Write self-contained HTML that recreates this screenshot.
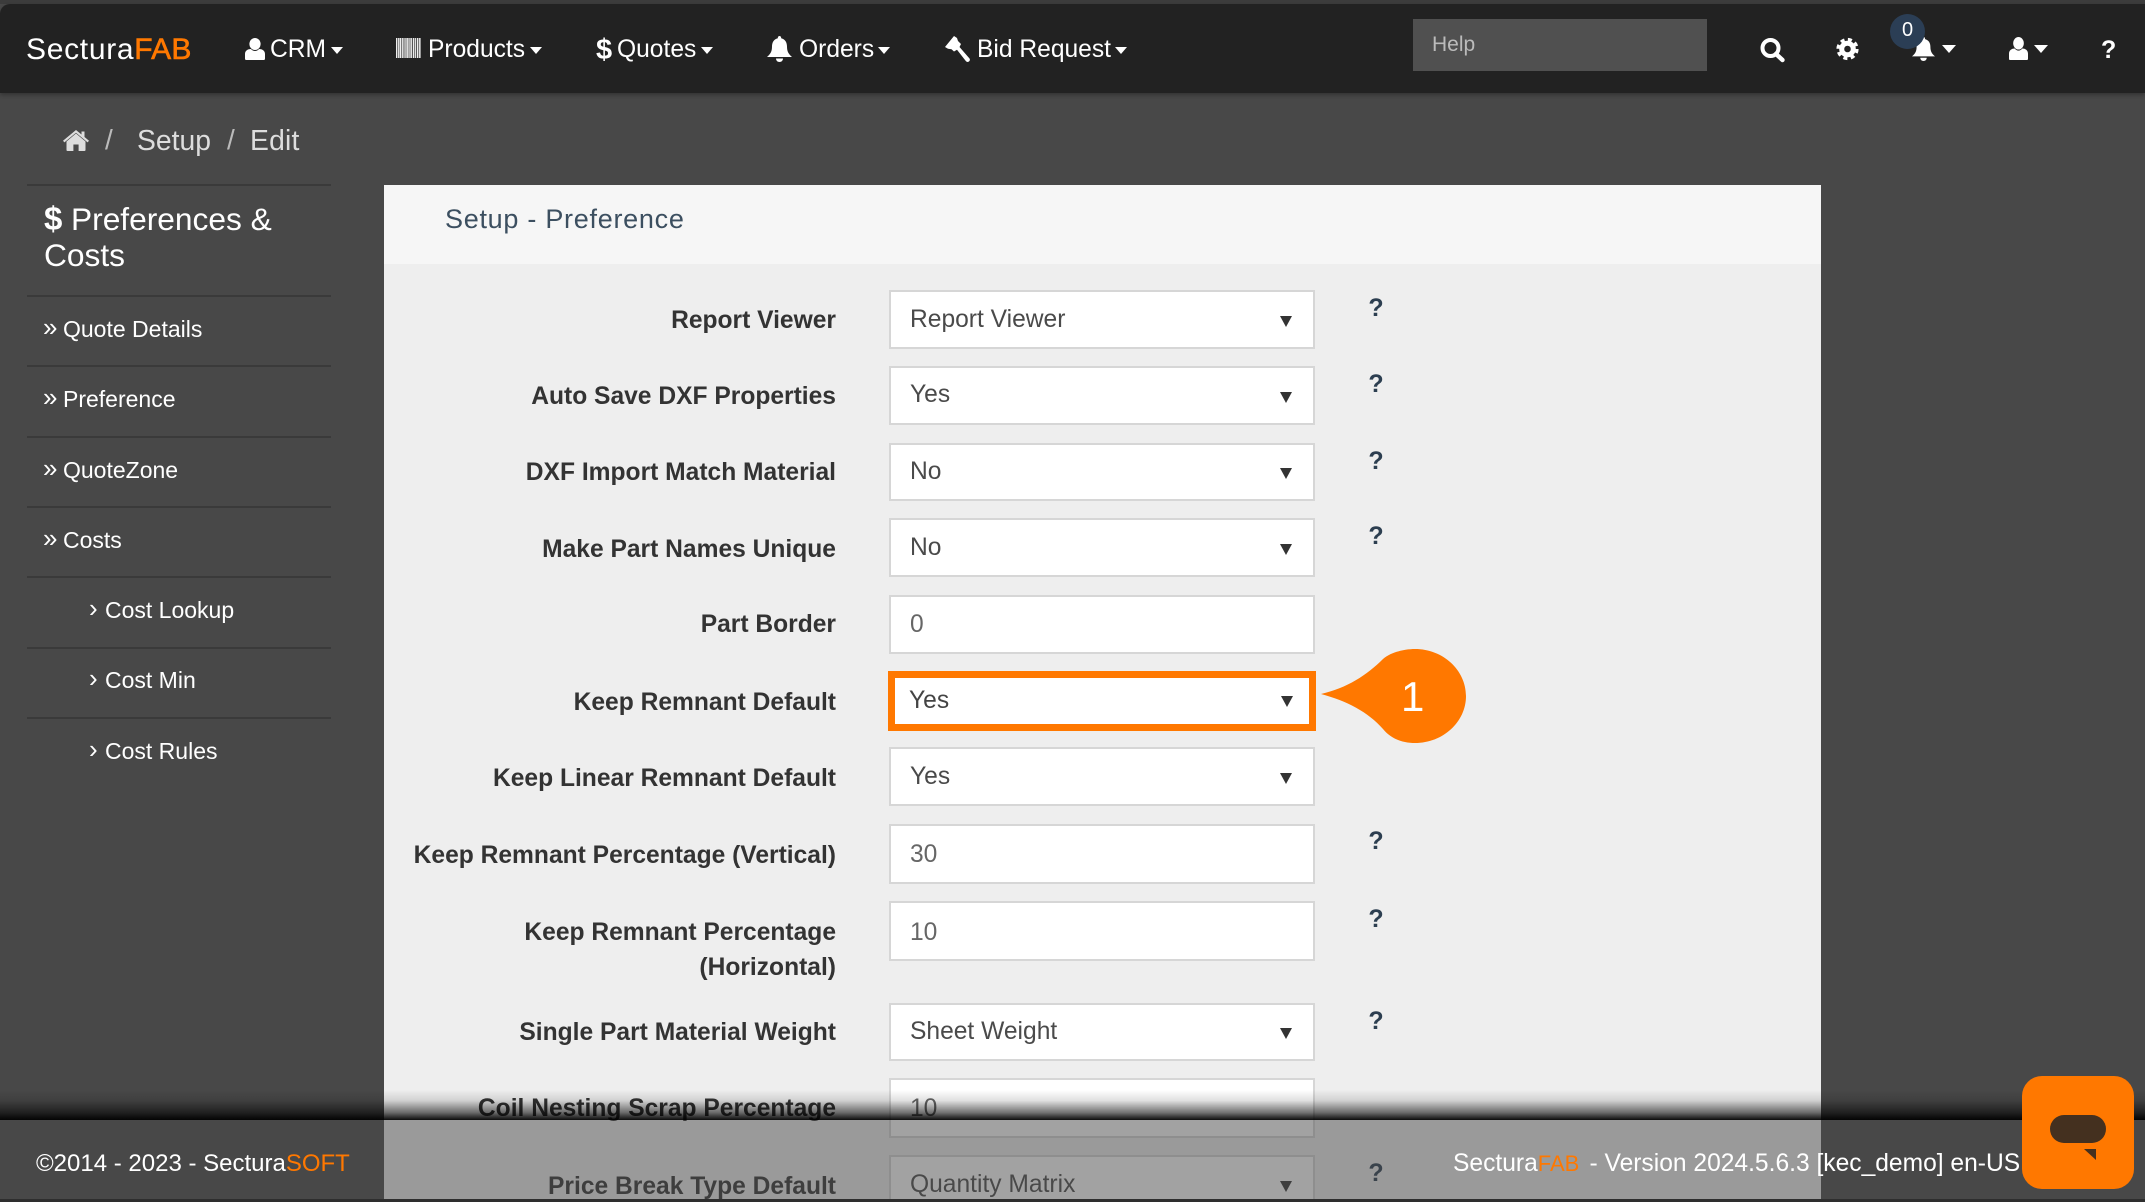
<!DOCTYPE html>
<html><head><meta charset="utf-8"><title>Setup - Preference</title>
<style>
html,body{margin:0;padding:0;width:2145px;height:1202px;overflow:hidden;background:#2e2e2e;font-family:"Liberation Sans",sans-serif}
#p{position:absolute;left:0;top:0;width:2145px;height:1202px;overflow:hidden;background:#484848;filter:blur(.35px)}
.a{position:absolute}
.t{position:absolute;white-space:nowrap;line-height:40px;height:40px}
.n{color:#fff;font-size:24.6px;top:30px}
.c{position:absolute;width:0;height:0;border-left:6.5px solid transparent;border-right:6.5px solid transparent;border-top:7px solid #fff;top:47px}
.l{position:absolute;left:27px;width:304px;height:2px;background:#3a3a3a}
.s{color:#fff;font-size:23px}
.s b{font-weight:normal;font-size:26px;line-height:36px;position:absolute;left:0;top:0}
.lb{position:absolute;right:1309px;font-weight:bold;font-size:24.6px;color:#333;text-align:right;white-space:nowrap;line-height:36px}
.f{position:absolute;left:889px;width:426px;box-sizing:border-box;background:#fff;border:2px solid #d6d6d6;color:#4a4a4a;font-size:24.6px;padding-left:19px}
.f::after{content:"";position:absolute;right:21.5px;top:50%;margin-top:-4px;border-left:6.5px solid transparent;border-right:6.5px solid transparent;border-top:11px solid #333}
.i::after,.h::after{display:none}
.i{color:#666}
.q{position:absolute;left:1368px;width:16px;text-align:center;font-weight:bold;font-size:25px;line-height:30px;color:#2c3e50}
svg{position:absolute;overflow:visible}
</style></head><body><div id="p">

<!-- top chrome -->
<div class="a" style="left:0;top:0;width:2145px;height:4px;background:#3c3c3c"></div>
<div class="a" style="left:0;top:4px;width:2145px;height:89px;background:#222;border-top-left-radius:10px;box-shadow:0 2px 4px rgba(0,0,0,.3)"></div>

<div class="t" style="left:26px;top:30px;font-size:30px;color:#fff;letter-spacing:.7px">Sectura<span style="color:#ff7800;letter-spacing:.2px;-webkit-text-stroke:.6px #ff7800">FAB</span></div>

<svg style="left:245px;top:38px" width="20" height="22" viewBox="0 0 20 22"><ellipse cx="10" cy="6" rx="5.6" ry="6" fill="#fff"/><path d="M1 22C.3 22 0 21.4 0 20.4V16C0 12.5 3 11 6 11C7 12.3 8.5 13 10 13C11.5 13 13 12.3 14 11C17 11 20 12.5 20 16V20.4C20 21.4 19.7 22 19 22Z" fill="#fff"/></svg>
<div class="t n" style="left:270px">CRM</div><div class="c" style="left:331px"></div>

<div class="a" style="left:396px;top:38px;width:25px;height:20px;background:repeating-linear-gradient(90deg,#eee 0 1px,#777 1px 2px,#ddd 2px 3.4px,#555 3.4px 4.2px)"></div>
<div class="t n" style="left:428px">Products</div><div class="c" style="left:530px"></div>

<div class="t" style="left:596px;top:30px;color:#fff;font-size:29px;font-weight:bold">$</div>
<div class="t n" style="left:617px">Quotes</div><div class="c" style="left:701px"></div>

<svg style="left:767px;top:36px" width="25" height="26" viewBox="0 0 25 26"><path d="M12.5 0C13.6 0 14.2.8 14.2 2.2C18.2 3.2 20 6.5 20 10.5C20 15.5 21.5 18 25 21H0C3.5 18 5 15.5 5 10.5C5 6.5 6.8 3.2 10.8 2.2C10.8.8 11.4 0 12.5 0ZM9 22.5H16C16 24.6 14.5 26 12.5 26S9 24.6 9 22.5Z" fill="#fff"/></svg>
<div class="t n" style="left:799px">Orders</div><div class="c" style="left:878px"></div>

<svg style="left:945px;top:36px" width="25" height="26" viewBox="0 0 25 26"><path d="M0 11L9 0L12 2L13 5L16 8L14.5 11L24.5 22.5C25.3 23.6 24.8 25.2 23.5 25.8C22.5 26.2 21.5 25.8 20.8 25L12 13.8L9 15.5L6.5 13.2L3 12.8Z" fill="#fff"/></svg>
<div class="t n" style="left:977px">Bid Request</div><div class="c" style="left:1115px"></div>

<div class="a" style="left:1413px;top:19px;width:294px;height:52px;background:#505050"></div>
<div class="t" style="left:1432px;top:25px;font-size:21px;color:#bbb">Help</div>

<svg style="left:1760px;top:38px" width="25" height="24" viewBox="0 0 25 24"><circle cx="10.5" cy="10" r="8" fill="none" stroke="#fff" stroke-width="4"/><path d="M16 16L22.5 22" stroke="#fff" stroke-width="4.4" stroke-linecap="round"/></svg>
<svg style="left:1836px;top:38px" width="23" height="22" viewBox="0 0 23 22"><circle cx="11.5" cy="11" r="5.8" fill="none" stroke="#fff" stroke-width="5"/><circle cx="11.5" cy="11" r="9.4" fill="none" stroke="#fff" stroke-width="3.4" stroke-dasharray="4 3.4"/></svg>
<svg style="left:1912px;top:37px" width="23" height="24" viewBox="0 0 25 26"><path d="M12.5 0C13.6 0 14.2.8 14.2 2.2C18.2 3.2 20 6.5 20 10.5C20 15.5 21.5 18 25 21H0C3.5 18 5 15.5 5 10.5C5 6.5 6.8 3.2 10.8 2.2C10.8.8 11.4 0 12.5 0ZM9 22.5H16C16 24.6 14.5 26 12.5 26S9 24.6 9 22.5Z" fill="#fff"/></svg>
<div class="a" style="left:1890px;top:14px;width:35px;height:35px;border-radius:50%;background:#2b3e55;color:#fff;font-size:20px;line-height:33px;text-align:center">0</div>
<div class="c" style="left:1942px;top:45px;border-left-width:7.5px;border-right-width:7.5px;border-top-width:8px"></div>
<svg style="left:2009px;top:37px" width="19" height="23" viewBox="0 0 20 22" preserveAspectRatio="none"><ellipse cx="10" cy="6" rx="5.6" ry="6" fill="#fff"/><path d="M1 22C.3 22 0 21.4 0 20.4V16C0 12.5 3 11 6 11C7 12.3 8.5 13 10 13C11.5 13 13 12.3 14 11C17 11 20 12.5 20 16V20.4C20 21.4 19.7 22 19 22Z" fill="#fff"/></svg>
<div class="c" style="left:2034px;top:45px;border-left-width:7.5px;border-right-width:7.5px;border-top-width:8px"></div>
<div class="t" style="left:2101px;top:30px;font-size:25px;font-weight:bold;color:#fff">?</div>

<!-- breadcrumb -->
<svg style="left:63px;top:130px" width="26" height="21" viewBox="0 0 26 21"><path d="M13 3.5L22.5 11.5V20C22.5 20.6 22.1 21 21.5 21H15.6V14.5H10.4V21H4.5C3.9 21 3.5 20.6 3.5 20V11.5ZM13 0L18.5 4.5V1.5H21.5V7L26 10.8L24.6 12.4L13 2.8L1.4 12.4L0 10.8Z" fill="#ddd"/></svg>
<div class="t" style="left:105px;top:120px;font-size:28px;color:#bbb">/</div>
<div class="t" style="left:137px;top:120px;font-size:28.3px;color:#ddd">Setup</div>
<div class="t" style="left:227px;top:120px;font-size:28px;color:#bbb">/</div>
<div class="t" style="left:250px;top:120px;font-size:28.3px;letter-spacing:.2px;color:#ddd">Edit</div>

<!-- sidebar -->
<div class="l" style="top:184px"></div>
<div class="t" style="left:44px;top:199px;font-size:33px;font-weight:bold;color:#fff">$</div>
<div class="t" style="left:71px;top:199px;font-size:31.7px;color:#fff">Preferences &amp;</div>
<div class="t" style="left:44px;top:235px;font-size:31.7px;color:#fff">Costs</div>
<div class="l" style="top:294.5px"></div>
<div class="t s" style="left:43px;top:309px"><b>»</b><span class="a" style="left:20px">Quote Details</span></div>
<div class="l" style="top:364.5px"></div>
<div class="t s" style="left:43px;top:379px"><b>»</b><span class="a" style="left:20px">Preference</span></div>
<div class="l" style="top:435.5px"></div>
<div class="t s" style="left:43px;top:450px"><b>»</b><span class="a" style="left:20px">QuoteZone</span></div>
<div class="l" style="top:505.5px"></div>
<div class="t s" style="left:43px;top:520px"><b>»</b><span class="a" style="left:20px">Costs</span></div>
<div class="l" style="top:575.5px"></div>
<div class="t s" style="left:89px;top:590px"><b>›</b><span class="a" style="left:16px">Cost Lookup</span></div>
<div class="l" style="top:646.5px"></div>
<div class="t s" style="left:89px;top:660px"><b>›</b><span class="a" style="left:16px">Cost Min</span></div>
<div class="l" style="top:716.5px"></div>
<div class="t s" style="left:89px;top:731px"><b>›</b><span class="a" style="left:16px">Cost Rules</span></div>

<!-- panel -->
<div class="a" style="left:384px;top:185px;width:1437px;height:1014px;background:#eee"></div>
<div class="a" style="left:384px;top:185px;width:1437px;height:79px;background:#f6f6f6"></div>
<div class="t" style="left:445px;top:199px;font-size:27px;letter-spacing:.72px;color:#3c4f60">Setup - Preference</div>

<div class="lb" style="top:303px">Report Viewer</div>
<div class="lb" style="top:379px">Auto Save DXF Properties</div>
<div class="lb" style="top:455px">DXF Import Match Material</div>
<div class="lb" style="top:532px">Make Part Names Unique</div>
<div class="lb" style="top:607px">Part Border</div>
<div class="lb" style="top:685px">Keep Remnant Default</div>
<div class="lb" style="top:761px">Keep Linear Remnant Default</div>
<div class="lb" style="top:838px">Keep Remnant Percentage (Vertical)</div>
<div class="lb" style="top:915px">Keep Remnant Percentage</div>
<div class="lb" style="top:950px">(Horizontal)</div>
<div class="lb" style="top:1015px">Single Part Material Weight</div>
<div class="lb" style="top:1091px">Coil Nesting Scrap Percentage</div>
<div class="lb" style="top:1169px">Price Break Type Default</div>

<div class="f" style="top:290px;height:59px;line-height:55px">Report Viewer</div>
<div class="f" style="top:366px;height:59px;line-height:53px">Yes</div>
<div class="f" style="top:443px;height:58px;line-height:53px">No</div>
<div class="f" style="top:518px;height:59px;line-height:55px">No</div>
<div class="f i" style="top:595px;height:59px;line-height:55px">0</div>
<div class="f h" style="top:671px;height:60px;line-height:46px;left:888px;width:428px;border:7px solid #ff7800;padding-left:14px;color:#444"><span class="a" style="right:16.5px;top:18px;width:0;height:0;border-left:6.5px solid transparent;border-right:6.5px solid transparent;border-top:11px solid #333"></span>Yes</div>
<div class="f" style="top:747px;height:59px;line-height:55px">Yes</div>
<div class="f i" style="top:824px;height:60px;line-height:58px">30</div>
<div class="f i" style="top:901px;height:60px;line-height:60px">10</div>
<div class="f" style="top:1003px;height:58px;line-height:54px">Sheet Weight</div>
<div class="f i" style="top:1078px;height:60px;line-height:58px">10</div>
<div class="f" style="top:1155px;height:60px;line-height:56px">Quantity Matrix</div>

<div class="q" style="top:293px">?</div>
<div class="q" style="top:369px">?</div>
<div class="q" style="top:446px">?</div>
<div class="q" style="top:521px">?</div>
<div class="q" style="top:826px">?</div>
<div class="q" style="top:904px">?</div>
<div class="q" style="top:1006px">?</div>
<div class="q" style="top:1158px">?</div>

<!-- callout -->
<svg style="left:1321px;top:649px" width="145" height="94" viewBox="0 0 145 94"><path d="M0 45C26 39 46 26 62 10C70 3 84 0 94 0C122 0 145 21 145 47C145 73 122 94 94 94C82 94 70 90 62 80C47 63 26 52 0 45Z" fill="#ff7800"/></svg>
<div class="t" style="left:1401px;top:677px;font-size:42px;color:#fff">1</div>

<!-- footer -->
<div class="a" style="left:0;top:1090px;width:2145px;height:30px;background:linear-gradient(rgba(0,0,0,0),rgba(0,0,0,.12) 35%,rgba(0,0,0,.55) 75%,rgba(0,0,0,.95))"></div>
<div class="a" style="left:0;top:1120px;width:2145px;height:79px;background:rgba(72,72,72,.51)"></div>
<div class="a" style="left:0;top:1199px;width:2145px;height:3px;background:#2e2e2e"></div>
<div class="t" style="left:36px;top:1144px;font-size:24px;color:#fff">©2014 - 2023 - Sectura<span style="color:#ff7800">SOFT</span></div>
<div class="t" style="left:1453px;top:1144px;font-size:24.6px;color:#fff">Sectura<span style="color:#ff7800;font-size:22px">FAB</span></div>
<div class="t" style="left:1589.5px;top:1144px;font-size:24.6px;color:#fff">- Version 2024.5.6.3 [kec_demo] en-US</div>

<!-- chat -->
<div class="a" style="left:2022px;top:1076px;width:112px;height:113px;background:#ff7800;border-radius:20px"></div>
<div class="a" style="left:2050px;top:1115px;width:56px;height:28px;background:#44301f;border-radius:14px"></div>
<svg style="left:2084px;top:1149px" width="12" height="11" viewBox="0 0 12 11"><path d="M0 0H12V11Z" fill="#44301f"/></svg>

</div></body></html>
